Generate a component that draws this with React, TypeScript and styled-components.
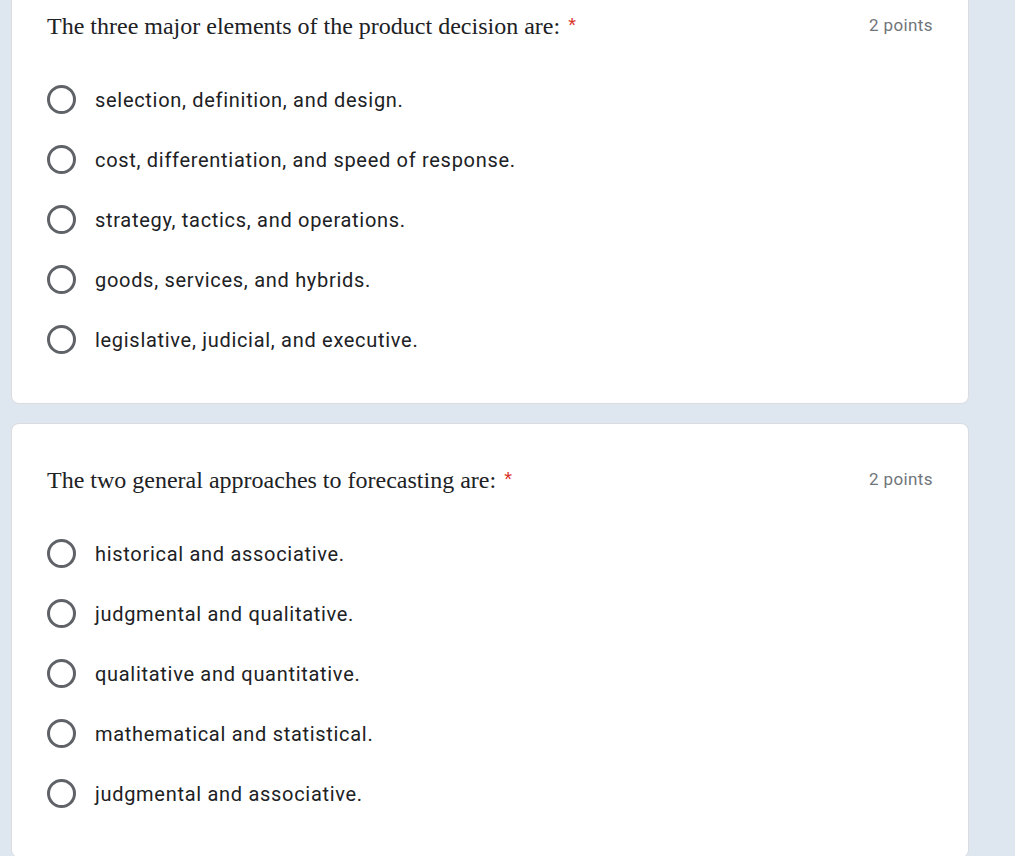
import React from "react";
import styled, { createGlobalStyle } from "styled-components";

const GlobalStyle = createGlobalStyle`
  html, body {
    margin: 0;
    padding: 0;
    background: #dee7ef;
    overflow: hidden;
  }
  body {
    font-family: Roboto, "Liberation Sans", Arial, sans-serif;
  }
`;

const Page = styled.main`
  display: flex;
  flex-direction: column;
  gap: 19px;
  width: 958px;
  margin-top: -31px;
  padding-left: 11px;
`;

const Card = styled.section`
  background: #ffffff;
  border: 1px solid #dadce0;
  border-radius: 8px;
  padding: 40px 35px 34px 35px;
`;

const Header = styled.div`
  display: flex;
  justify-content: space-between;
  align-items: center;
  height: 30px;
`;

const Title = styled.h2`
  margin: 0;
  font-family: "Liberation Serif", "Times New Roman", serif;
  font-weight: 400;
  font-size: 24px;
  line-height: 28px;
  color: #202124;
  letter-spacing: 0;
`;

const Required = styled.span`
  color: #d93025;
  font-family: "Liberation Sans", Arial, sans-serif;
  font-size: 20px;
  margin-left: 8px;
  vertical-align: 2px;
`;

const Points = styled.span`
  font-family: Roboto, "Liberation Sans", Arial, sans-serif;
  font-size: 17px;
  letter-spacing: 0.4px;
  color: #70757a;
`;

const Options = styled.ul`
  list-style: none;
  margin: 29px 0 0 0;
  padding: 0;
  display: flex;
  flex-direction: column;
`;

const Option = styled.li`
  display: flex;
  align-items: center;
  gap: 19px;
  height: 60px;
`;

const Radio = styled.span`
  box-sizing: border-box;
  width: 29px;
  height: 29px;
  border: 3px solid #5f6368;
  border-radius: 50%;
  flex-shrink: 0;
`;

const OptionLabel = styled.span`
  font-family: Roboto, "Liberation Sans", Arial, sans-serif;
  font-size: 20px;
  line-height: 26px;
  padding-top: 1px;
  letter-spacing: 0.7px;
  color: #202124;
`;

type Question = { title: string; points: string; options: string[] };

const questions: Question[] = [
  {
    title: "The three major elements of the product decision are:",
    points: "2 points",
    options: [
      "selection, definition, and design.",
      "cost, differentiation, and speed of response.",
      "strategy, tactics, and operations.",
      "goods, services, and hybrids.",
      "legislative, judicial, and executive.",
    ],
  },
  {
    title: "The two general approaches to forecasting are:",
    points: "2 points",
    options: [
      "historical and associative.",
      "judgmental and qualitative.",
      "qualitative and quantitative.",
      "mathematical and statistical.",
      "judgmental and associative.",
    ],
  },
];

export default function App() {
  return (
    <>
      <GlobalStyle />
      <Page>
        {questions.map((q) => (
          <Card key={q.title}>
            <Header>
              <Title>
                {q.title}
                <Required>*</Required>
              </Title>
              <Points>{q.points}</Points>
            </Header>
            <Options>
              {q.options.map((o) => (
                <Option key={o}>
                  <Radio />
                  <OptionLabel>{o}</OptionLabel>
                </Option>
              ))}
            </Options>
          </Card>
        ))}
      </Page>
    </>
  );
}
